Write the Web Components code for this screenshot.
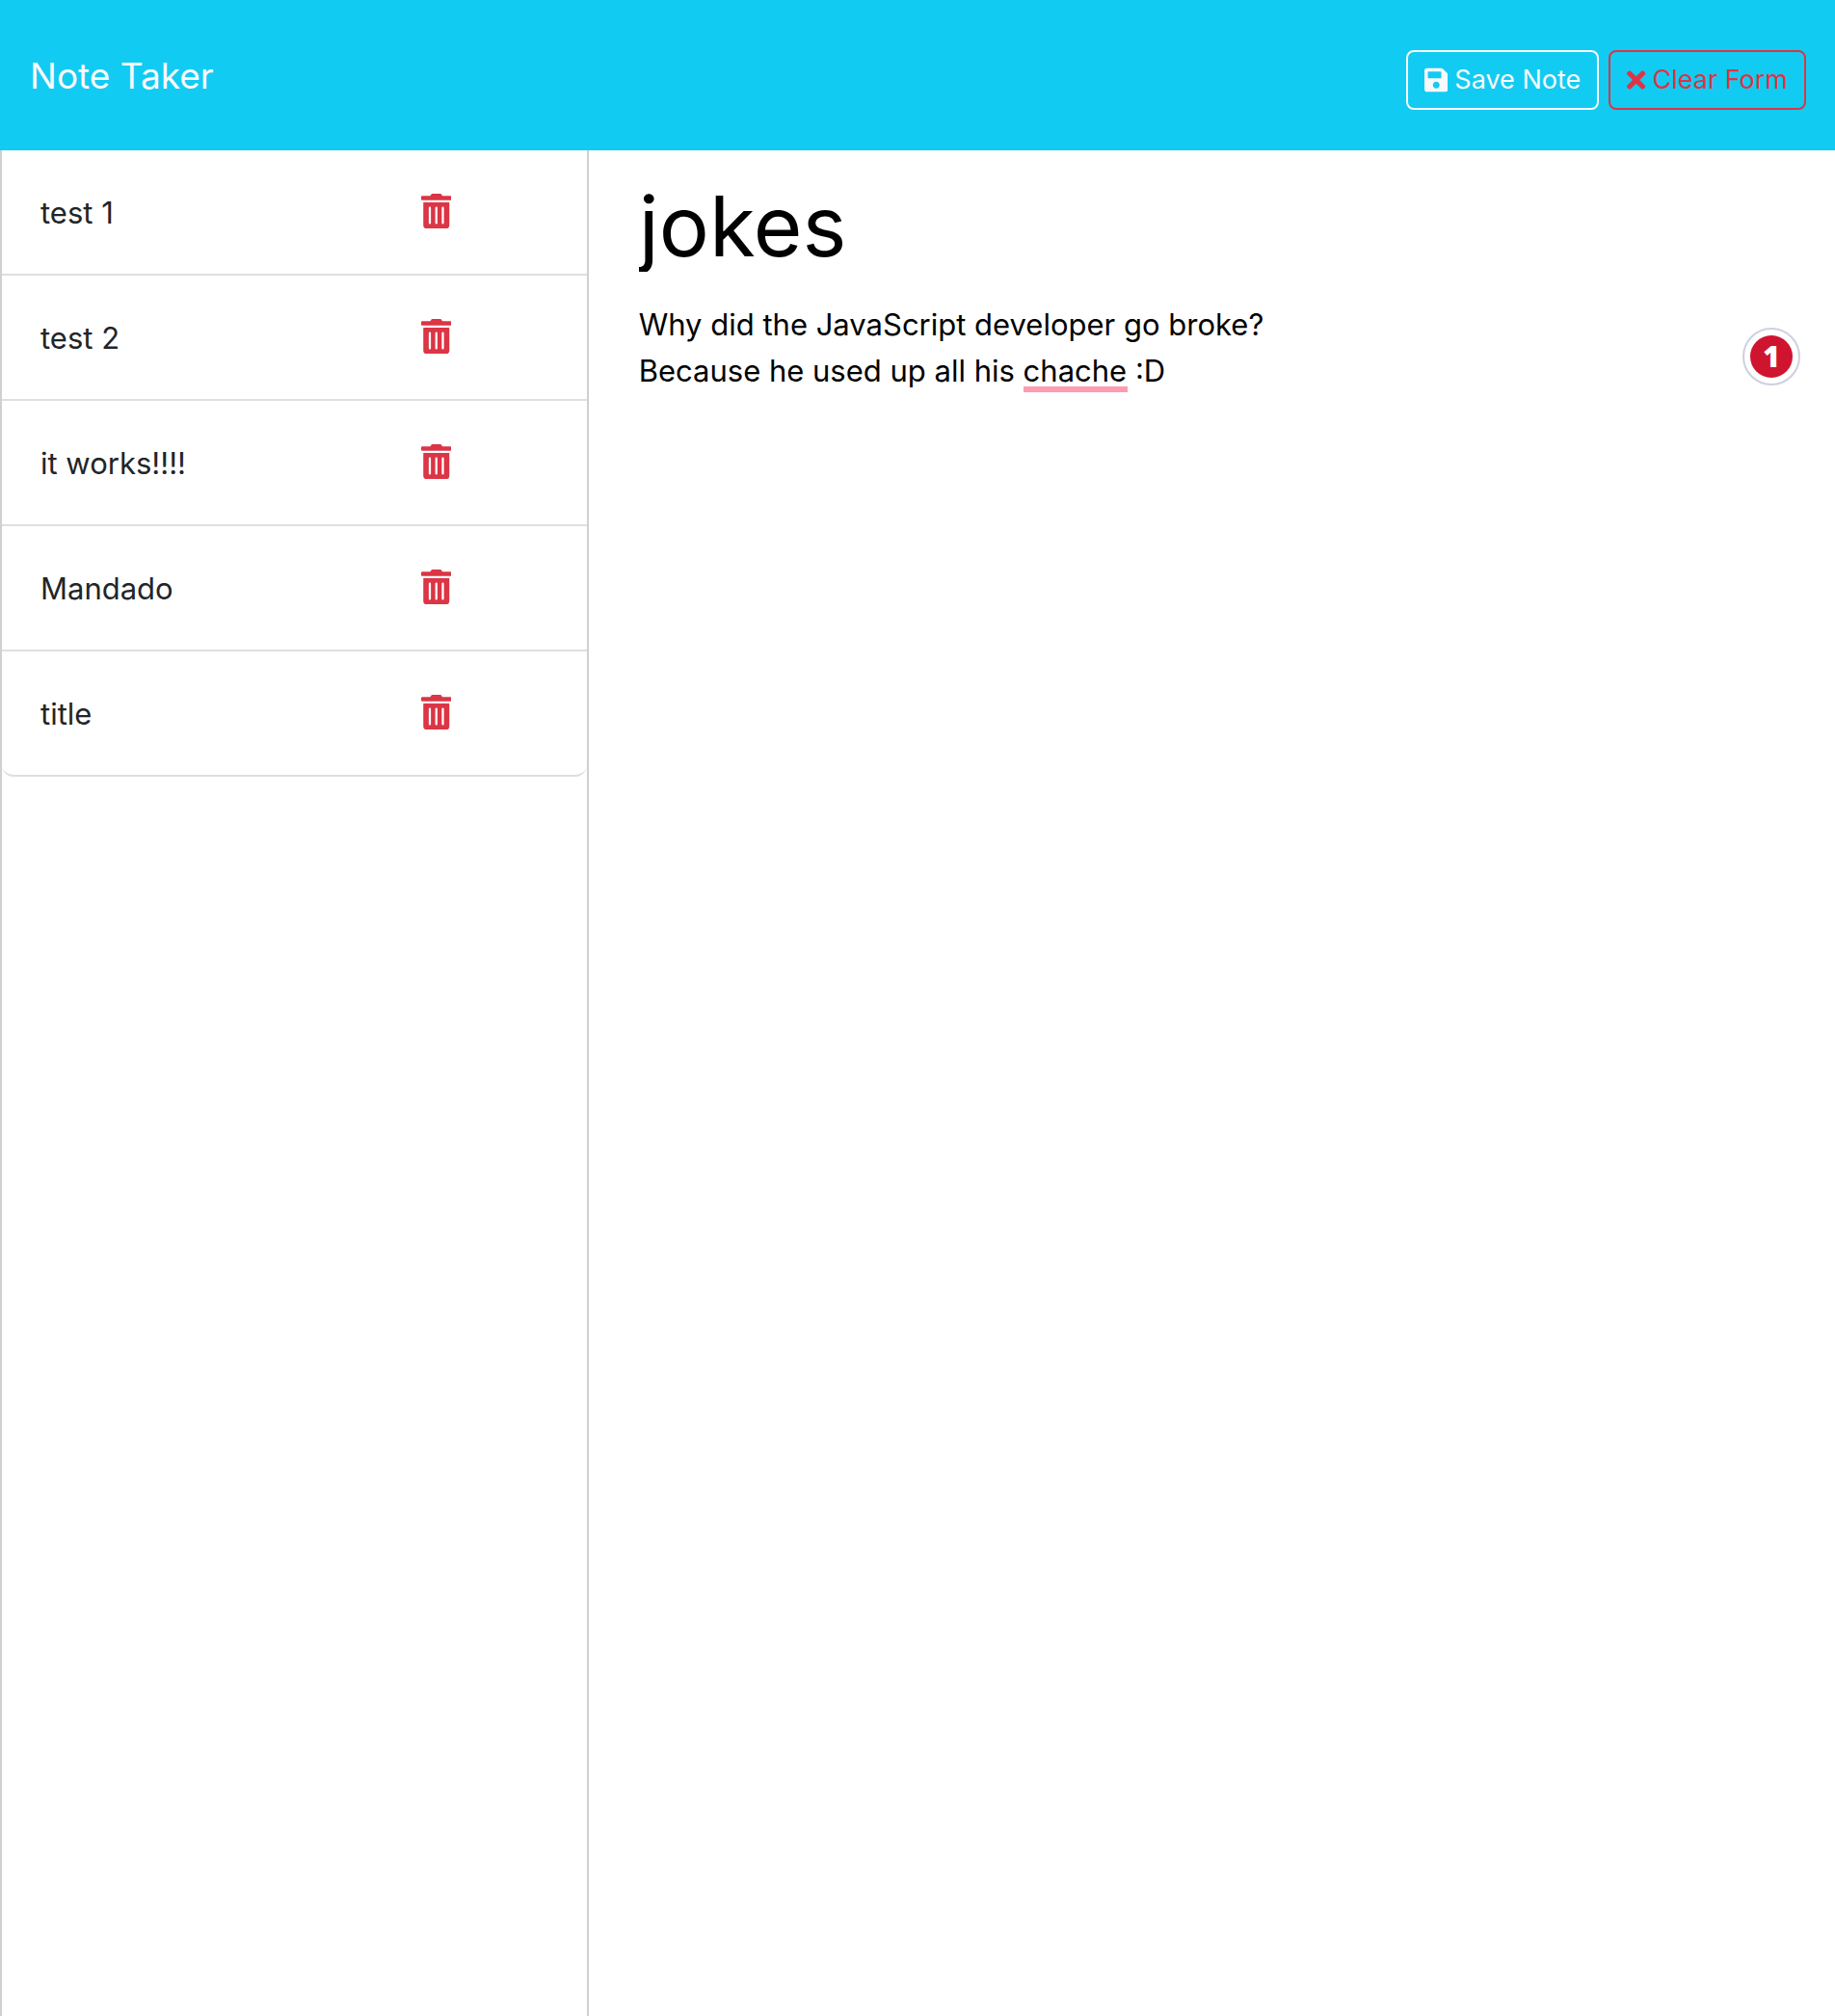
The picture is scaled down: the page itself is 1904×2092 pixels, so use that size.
<!DOCTYPE html>
<html lang="en">
<head>
<meta charset="utf-8">
<meta name="viewport" content="width=device-width, initial-scale=1">
<title>Note Taker</title>
<style>
  body {
    margin: 0;
    background: #fff;
    color: #212529;
    font-family: Inter, "Liberation Sans", sans-serif;
    font-size: 31px;
    line-height: 48px;
  }
</style>
</head>
<body>
<note-app>
  <note-header slot="header">
    Note Taker
    <note-button slot="actions" icon="save">Save Note</note-button>
    <note-button slot="actions" icon="times" variant="danger">Clear Form</note-button>
  </note-header>
  <note-list slot="list">
    <note-item>test 1</note-item>
    <note-item>test 2</note-item>
    <note-item>it works!!!!</note-item>
    <note-item>Mandado</note-item>
    <note-item>title</note-item>
  </note-list>
  <note-editor slot="editor" heading="jokes" misspelled="chache"></note-editor>
</note-app>

<script>
const ICONS = {
  save: ['0 0 448 512', 'M433.941 129.941l-83.882-83.882A48 48 0 0 0 316.118 32H48C21.49 32 0 53.49 0 80v352c0 26.51 21.49 48 48 48h352c26.51 0 48-21.49 48-48V163.882a48 48 0 0 0-14.059-33.941zM224 416c-35.346 0-64-28.654-64-64 0-35.346 28.654-64 64-64s64 28.654 64 64c0 35.346-28.654 64-64 64zm96-304.52V212c0 6.627-5.373 12-12 12H76c-6.627 0-12-5.373-12-12V108c0-6.627 5.373-12 12-12h228.52c3.183 0 6.235 1.264 8.485 3.515l3.48 3.48A11.996 11.996 0 0 1 320 111.48z'],
  times: ['0 0 352 512', 'M242.72 256l100.07-100.07c12.28-12.28 12.28-32.19 0-44.48l-22.24-22.24c-12.28-12.28-32.19-12.28-44.48 0L176 189.28 75.93 89.21c-12.28-12.28-32.19-12.28-44.48 0L9.21 111.45c-12.28 12.28-12.28 32.19 0 44.48L109.28 256 9.21 356.07c-12.28 12.28-12.28 32.19 0 44.48l22.24 22.24c12.28 12.28 32.2 12.28 44.48 0L176 322.72l100.07 100.07c12.28 12.28 32.2 12.28 44.48 0l22.24-22.24c12.28-12.28 12.28-32.19 0-44.48L242.72 256z'],
  trash: ['0 0 448 512', 'M32 464a48 48 0 0 0 48 48h288a48 48 0 0 0 48-48V128H32zm272-256a16 16 0 0 1 32 0v224a16 16 0 0 1-32 0zm-96 0a16 16 0 0 1 32 0v224a16 16 0 0 1-32 0zm-96 0a16 16 0 0 1 32 0v224a16 16 0 0 1-32 0zM432 32H312l-9.4-18.7A24 24 0 0 0 281.1 0H166.8a23.72 23.72 0 0 0-21.4 13.3L136 32H16A16 16 0 0 0 0 48v32a16 16 0 0 0 16 16h416a16 16 0 0 0 16-16V48a16 16 0 0 0-16-16z']
};
const icon = name => `<svg viewBox="${ICONS[name][0]}" aria-hidden="true"><path fill="currentColor" d="${ICONS[name][1]}"/></svg>`;

class NoteApp extends HTMLElement {
  constructor() {
    super();
    this.attachShadow({ mode: 'open' }).innerHTML = `
      <style>
        :host { display: flex; flex-direction: column; min-height: 100vh; }
        main { flex: 1; display: flex; }
        aside {
          box-sizing: border-box;
          flex: none;
          width: calc(100% / 3 - 24px);
          border: solid #d0d0d0;
          border-width: 0 2px;
        }
        section { flex: 1; min-width: 0; display: flex; }
      </style>
      <slot name="header"></slot>
      <main>
        <aside><slot name="list"></slot></aside>
        <section><slot name="editor"></slot></section>
      </main>`;
  }
}

class NoteHeader extends HTMLElement {
  constructor() {
    super();
    this.attachShadow({ mode: 'open' }).innerHTML = `
      <style>
        :host { display: block; background: #12cbf2; }
        header {
          display: flex;
          justify-content: space-between;
          align-items: flex-start;
          padding: 52px 30px 42px 31px;
        }
        a { color: #f8f9fa; font-size: 37px; line-height: 54px; text-decoration: none; }
        nav { display: flex; gap: 10px; }
      </style>
      <header>
        <a href="#"><slot></slot></a>
        <nav><slot name="actions"></slot></nav>
      </header>`;
  }
}

class NoteButton extends HTMLElement {
  connectedCallback() {
    this.attachShadow({ mode: 'open' }).innerHTML = `
      <style>
        :host { display: block; color: #f8f9fa; }
        :host([variant=danger]) { color: #dc3545; }
        button {
          display: flex;
          align-items: center;
          gap: 7px;
          height: 62px;
          padding: 0 17px;
          border: 2px solid currentColor;
          border-radius: 8px;
          background: none;
          color: inherit;
          font: inherit;
          font-size: 27px;
          cursor: pointer;
        }
        svg { height: 28px; }
      </style>
      <button type="button">${icon(this.getAttribute('icon'))}<span><slot></slot></span></button>`;
  }
}

class NoteList extends HTMLElement {
  constructor() {
    super();
    this.attachShadow({ mode: 'open' }).innerHTML = `
      <style>
        :host { display: block; }
        div { display: flex; flex-direction: column; }
        ::slotted(:last-child) { border-radius: 0 0 12px 12px; }
      </style>
      <div role="list"><slot></slot></div>`;
  }
}

class NoteItem extends HTMLElement {
  connectedCallback() {
    this.setAttribute('role', 'listitem');
    this.attachShadow({ mode: 'open' }).innerHTML = `
      <style>
        :host {
          display: grid;
          grid-template-columns: 3fr 1fr;
          align-items: center;
          padding: 41px 40px 39px;
          border-bottom: 2px solid #dfdfdf;
        }
        button {
          justify-self: start;
          display: flex;
          padding: 0 0 4px;
          border: 0;
          background: none;
          color: #dc3545;
          cursor: pointer;
        }
        svg { height: 36px; }
      </style>
      <span><slot></slot></span>
      <button type="button" aria-label="Delete note">${icon('trash')}</button>`;
  }
}

class NoteEditor extends HTMLElement {
  connectedCallback() {
    const root = this.attachShadow({ mode: 'open' });
    root.innerHTML = `
      <style>
        :host { flex: 1; display: flex; flex-direction: column; min-width: 0; padding: 32px 36px 0 52px; }
        input, textarea {
          box-sizing: border-box;
          width: 100%;
          margin: 0;
          padding: 0;
          border: 0;
          outline: 0;
          background: none;
          color: #000;
          font: inherit;
        }
        input { height: 94px; font-size: 87px; line-height: 94px; }
        .body { position: relative; flex: 1; display: flex; margin-top: 31px; }
        textarea { resize: none; line-height: 48px; }
        .mark { position: absolute; height: 6px; background: #ff9bb0; }
        .count {
          position: absolute;
          top: 27px;
          right: 0;
          box-sizing: border-box;
          width: 60px;
          height: 60px;
          padding: 6px;
          border: 2px solid #ccd1de;
          border-radius: 50%;
          background: #fff;
          cursor: pointer;
        }
        .count span {
          display: block;
          border-radius: 50%;
          background: #cf1430;
          color: #fff;
          font: 800 30px/44px "Open Sans", sans-serif;
          text-align: center;
        }
      </style>
      <input type="text" aria-label="Note title" spellcheck="false">
      <div class="body">
        <textarea aria-label="Note text" spellcheck="false">Why did the JavaScript developer go broke?
Because he used up all his chache :D</textarea>
        <div class="mark"></div>
        <button class="count" type="button" aria-label="1 spelling issue"><span>1</span></button>
      </div>`;
    root.querySelector('input').value = this.getAttribute('heading');
    this.underline(root.querySelector('textarea'), root.querySelector('.mark'));
  }

  // Places the spelling mark under the misspelled word.
  underline(area, mark) {
    const word = this.getAttribute('misspelled');
    const lines = area.value.split('\n');
    const row = lines.findIndex(line => line.includes(word));
    const style = getComputedStyle(area);
    const pen = document.createElement('canvas').getContext('2d');
    pen.font = `${style.fontSize} ${style.fontFamily}`;
    const before = lines[row].slice(0, lines[row].indexOf(word));
    mark.style.left = Math.round(pen.measureText(before).width) + 'px';
    mark.style.width = Math.round(pen.measureText(word).width) + 'px';
    mark.style.top = (row + 1) * parseInt(style.lineHeight) - 8 + 'px';
  }
}

customElements.define('note-app', NoteApp);
customElements.define('note-header', NoteHeader);
customElements.define('note-button', NoteButton);
customElements.define('note-list', NoteList);
customElements.define('note-item', NoteItem);
customElements.define('note-editor', NoteEditor);
</script>
</body>
</html>
